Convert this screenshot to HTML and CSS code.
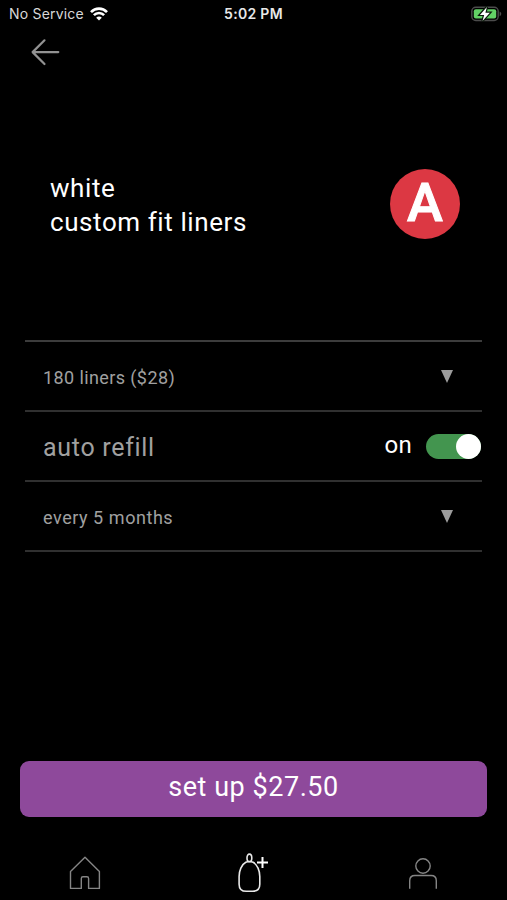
FILE: index.html
```html
<!DOCTYPE html>
<html lang="en">
<head>
  <meta charset="UTF-8" />
  <meta name="viewport" content="width=device-width, initial-scale=1.0" />
  <title>Custom Fit Liners</title>
  <link rel="stylesheet" href="styles.css">
</head>
<body>
  <div class="status-bar">
    <div class="carrier">
      <span class="carrier-name">No Service</span>
      <svg class="wifi" width="18" height="14" viewBox="0 0 18 14" fill="none" stroke="#fff" stroke-width="2.6">
        <path d="M1 5.1C5.4 .4 12.6 .4 17 5.1" />
        <path d="M3.9 8.2C6.7 5.3 11.3 5.3 14.1 8.2" />
        <path d="M9 13.5L6.2 10.7C7.8 9.2 10.2 9.2 11.8 10.7Z" fill="#fff" stroke="none" />
      </svg>
    </div>
    <div class="clock">5:02 PM</div>
    <svg class="battery" width="31" height="16" viewBox="0 0 31 16">
      <rect x=".8" y="1.3" width="26.4" height="13.2" rx="4" fill="#000" stroke="#4c4c4c" stroke-width="1.4" />
      <rect x="2.8" y="3.3" width="22.4" height="9.2" rx="2" fill="#62d165" />
      <path d="M28.6 5.6C30.8 6.4 30.8 9.4 28.6 10.2Z" fill="#4c4c4c" />
      <path d="M15.9 .9L8.9 8.9H13.2L11.5 15L18.9 6.8H14.4Z" fill="#fff" stroke="#0b1a0b" stroke-width="2.4" paint-order="stroke" />
    </svg>
  </div>

  <div class="header">
    <svg class="back" width="30" height="28" viewBox="0 0 30 28" fill="none" stroke="#929292" stroke-width="2.2" stroke-linecap="round" stroke-linejoin="round">
      <path d="M14.5 2.3L2.6 14.1L14.5 26M2.6 14.1H28.3" />
    </svg>
  </div>

  <div class="product">
    <h1 class="product-name">
      <span class="product-color">white</span>
      <span class="product-type">custom fit liners</span>
    </h1>
    <div class="badge">A</div>
  </div>

  <div class="options">
    <div class="row">
      <span class="quantity">180 liners ($28)</span>
      <svg class="caret" width="12" height="13" viewBox="0 0 12 13"><path d="M0 0H12L6 13Z" fill="#9c9c9c" /></svg>
    </div>
    <div class="row">
      <span class="label">auto refill</span>
      <div class="switch">
        <span class="switch-state">on</span>
        <div class="toggle"><div class="knob"></div></div>
      </div>
    </div>
    <div class="row">
      <span class="interval">every 5 months</span>
      <svg class="caret" width="12" height="13" viewBox="0 0 12 13"><path d="M0 0H12L6 13Z" fill="#9c9c9c" /></svg>
    </div>
  </div>

  <button class="setup">set up $27.50</button>

  <div class="tab-bar">
    <svg width="32" height="35" viewBox="0 0 32 35" fill="none" stroke="#858585" stroke-width="1.4" stroke-linejoin="round">
      <path d="M1.5 16.5L16 2.2L30.4 16.5V33.4H19.6V23.4Q19.6 21.7 17.9 21.7H14Q12.3 21.7 12.3 23.4V33.4H1.5Z" />
    </svg>
    <svg class="add" width="34" height="40" viewBox="0 0 34 40" fill="none" stroke="#e8e8e8" stroke-width="1.6">
      <path d="M8.8 9.3C4.5 11.5 2.1 18 2.1 23.5V31.2Q2.1 38.3 9.3 38.3H15.6Q22.8 38.3 22.8 31.2V23.5C22.8 18 20.4 11.5 16.1 9.3Q12.4 7.7 8.8 9.3Z" />
      <ellipse cx="12.4" cy="4.9" rx="2.4" ry="3.8" />
      <path d="M20 9.4H31M25.5 3.9V14.9" stroke="#fff" stroke-width="2" />
    </svg>
    <svg width="30" height="33" viewBox="0 0 30 33" fill="none" stroke="#858585" stroke-width="1.4">
      <circle cx="15" cy="9" r="7.2" />
      <path d="M1.7 31.8V23.7Q1.7 18.5 6.9 18.5H23.1Q28.3 18.5 28.3 23.7V31.8" />
    </svg>
  </div>
</body>
</html>
```
FILE: styles.css
```css
body {
  background: #000;
  color: #fff;
  font-family: Roboto, 'Liberation Sans', sans-serif;
  height: 100vh;
  margin: 0;
  display: flex;
  flex-direction: column;
  overflow: hidden;
}

svg {
  display: block;
  flex-shrink: 0;
}

.status-bar {
  display: grid;
  grid-template-columns: 1fr auto 1fr;
  align-items: center;
  height: 27px;
  padding: 0 5px 0 9px;
  font-family: Inter, sans-serif;
  font-size: 14px;
}

.carrier {
  display: flex;
  align-items: center;
  gap: 6px;
  color: #d8d8d8;
}

.carrier-name {
  letter-spacing: 0.2px;
}

.clock {
  margin-right: 4px;
  font-weight: 600;
  letter-spacing: 0.3px;
  color: #e8e8e8;
}

.battery {
  justify-self: end;
}

.header {
  height: 51px;
  padding: 11px 30px 0;
  box-sizing: border-box;
}

.product {
  display: flex;
  align-items: center;
  justify-content: space-between;
  height: 252px;
  padding: 0 47px 0 50px;
}

.product-name {
  display: flex;
  flex-direction: column;
  margin: 2px 0 0;
  font-size: 26px;
  font-weight: 400;
  line-height: 34px;
  letter-spacing: 0.58px;
}

.badge {
  width: 70px;
  height: 70px;
  border-radius: 50%;
  background: #dc3843;
  font-size: 54px;
  font-weight: 500;
  line-height: 68px;
  text-align: center;
  -webkit-text-stroke: 1px #fff;
}

.options {
  margin: 10px 25px 0;
  border-top: 2px solid #3c3c3c;
}

.row {
  display: flex;
  align-items: center;
  justify-content: space-between;
  height: 70px;
  padding-left: 18px;
  box-sizing: border-box;
  border-bottom: 2px solid #303030;
  color: #a0a0a0;
  font-size: 18px;
}

.quantity {
  padding-top: 3px;
  letter-spacing: 0.4px;
}

.interval {
  padding-top: 3px;
  letter-spacing: 0.55px;
}

.label {
  padding-top: 2px;
  font-size: 25px;
  letter-spacing: 0.7px;
}

.caret {
  margin: 1px 29px 0 0;
}

.switch {
  display: flex;
  align-items: center;
  gap: 14px;
}

.switch-state {
  margin-top: -2px;
  color: #fff;
  font-size: 24px;
  letter-spacing: 0.3px;
}

.toggle {
  display: flex;
  justify-content: flex-end;
  width: 55px;
  height: 25px;
  margin-right: 1px;
  border-radius: 13px;
  background: #43954f;
}

.knob {
  width: 25px;
  height: 25px;
  border-radius: 50%;
  background: #fff;
}

.setup {
  height: 56px;
  margin: 209px 20px 0;
  padding: 0 0 4px;
  border: none;
  border-radius: 9px;
  background: #8e499b;
  color: #fff;
  font-family: inherit;
  font-size: 27px;
  letter-spacing: 0.55px;
}

.tab-bar {
  display: flex;
  align-items: flex-end;
  justify-content: space-between;
  padding: 36px 69px 0;
}

/* the bottle hangs a little lower than its neighbours */
.tab-bar .add {
  margin: 0 2px -1px 0;
}

.tab-bar svg:not(.add) {
  margin-bottom: 2px;
}
```
